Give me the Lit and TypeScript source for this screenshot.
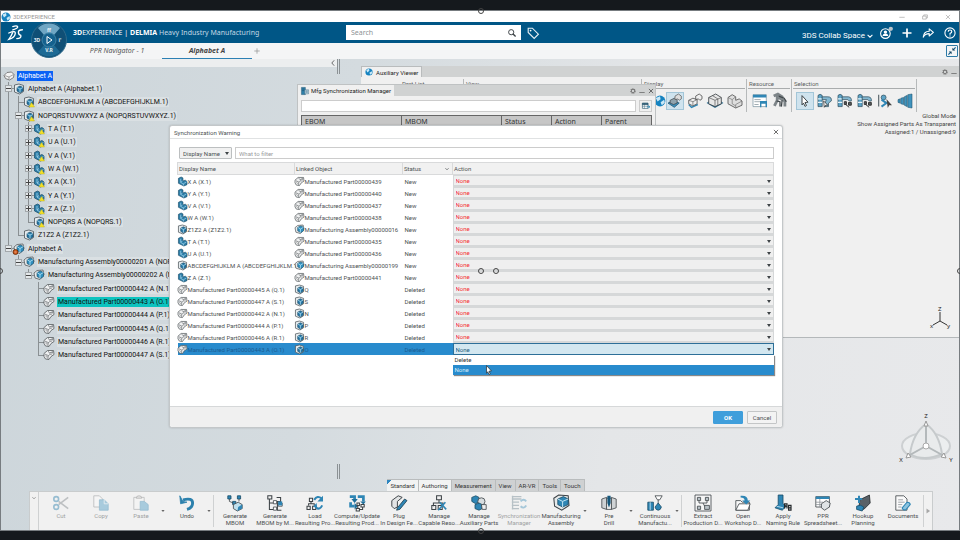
import { LitElement, html, svg, css, nothing } from "lit";
import { customElement } from "lit/decorators.js";
import { classMap } from "lit/directives/class-map.js";

const BLUE = "#2f86b5";
const DARK = "#3c4246";

/* Icon artwork, drawn on a 20 x 20 grid. */
const art: Record<string, unknown> = {
  part: svg`<path d="M1 3l6-3 4 2v7l5-2 4 3v7l-7 3-12-6z" fill="#2e7fa8" stroke="#174a66" stroke-width="1.400"/><path d="M6 4v8l6 4M12 15v4M10 9l-4 3M12 15l7-4" fill="none" stroke="#a8d8ee" stroke-width="1.500"/>`,
  product: svg`<path d="M1 2l9-2 9 3v12l-8 5-10-4z" fill="#e6ecef" stroke="#4a5257" stroke-width="1.600"/><path d="M6 7l6-3 6 3v7l-6 4-6-4z" fill="#2577a5" stroke="#123f5a" stroke-width="1.200"/><path d="M6 7l6 3 6-3M12 10v7" fill="none" stroke="#b6e3f5" stroke-width="1.600"/>`,
  mpart: svg`<path d="M0 7l7-6 12 0 1 8-6 4-4 6-7-1-3-5z" fill="#f0f1f2" stroke="#54595c" stroke-width="1.600"/><path d="M2 8l6 4 10-8M8 12v6M8 2l3 4 7-3" fill="none" stroke="#5f6568" stroke-width="1.300"/><circle cx="6" cy="12" r="2.200" fill="#fff" stroke="#54595c"/><circle cx="14" cy="7" r="2" fill="#fff" stroke="#54595c"/>`,
  massy: svg`<path d="M0 6l6-5 12-1 2 9-8 10-10-3z" fill="#e9ebec" stroke="#54595c" stroke-width="1.600"/><path d="M6 5l7-3 6 3v8l-6 4-7-4z" fill="#2f8fbe" stroke="#14465f" stroke-width="1.200"/><path d="M6 5l6 4 7-4M12 9v8" fill="none" stroke="#c2e9f8" stroke-width="1.600"/>`,
  warn: svg`<path d="M10 20l5-9 6 9z" fill="#f4e02a" stroke="#b9a800" stroke-width=".8"/>`,
  badge: svg`<circle cx="3" cy="16" r="5" fill="#d05a1c" stroke="#5a2305" stroke-width="1.500"/><path d="M1 16h4" stroke="#fff"/>`,
  root: svg`<path d="M0 9l6-6 9-1 5 5-1 6-8 5-8-3z" fill="#f3f3f3" stroke="#666" stroke-width="1.600"/><path d="M1 9l9 3 9-5M10 12v5" fill="none" stroke="#777" stroke-width="1.300"/>`,
  globe: svg`<circle cx="10" cy="10" r="9" fill="#1683c0"/><path d="M3 5l7-3 1 5-5 4zM11 12l6-4 1 5-5 4z" fill="#c9e8f7"/>`,
  cut: svg`<path d="M19 3L7 12M19 17L7 8" stroke="#8a9094" stroke-width="2"/><circle cx="4" cy="5" r="3" fill="none" stroke="#3f8ab3" stroke-width="2"/><circle cx="4" cy="15" r="3" fill="none" stroke="#3f8ab3" stroke-width="2"/>`,
  copy: svg`<path d="M1 1h7l4 4v10H1z" fill="#fafafa" stroke="#7f8487"/><path d="M8 6h6l5 5v8H8z" fill="#62a6ca" stroke="#3f8ab3"/><path d="M14 6v5h5" fill="none" stroke="#e7f3f9"/>`,
  paste: svg`<path d="M1 3h13v15H1z" fill="#f5f5f5" stroke="#85898b"/><path d="M4 4q0-3 3.500-3t3.500 3z" fill="#ddd" stroke="#777"/><path d="M9 8h5l5 4v7H9z" fill="#62a6ca" stroke="#3f8ab3"/>`,
  undo: svg`<path d="M5 6q12-3 12 4 0 6-7 8" fill="none" stroke="#2c81ad" stroke-width="3.600"/><path d="M1 1l1 10 8-2-5-1z" fill="#2c81ad" stroke="#2c81ad"/>`,
  genMbom: svg`<path d="M1 1h4v4H1zM13 1h4v4h-4zM7 8h4v4H7z" fill="${BLUE}" stroke="#174a66"/><path d="M3 5v3l5 2M15 5v3" fill="none" stroke="${DARK}"/><path d="M8 12l6-3 5 3v5l-6 3-5-3z" fill="#bfe0ee" stroke="${DARK}"/><path d="M14 15l5-3v5l-6 3z" fill="${BLUE}"/>`,
  genBy: svg`<path d="M1 1h5v4H1zM3 5v13h5M3 10h5M12 3h5v5h-4v11h5" fill="none" stroke="${DARK}" stroke-width="1.300"/><path d="M8 7h4v4H8zM14 10h5v4h-5zM8 15h4v4H8z" fill="#fff" stroke="${DARK}"/><path d="M14 8h5v5h-5z" fill="${BLUE}"/>`,
  load: svg`<path d="M3 4h4v4H3zM0 14h4v4H0zM7 14h4v4H7zM5 8v3M2 13v-2h7v2" fill="none" stroke="${DARK}" stroke-width="1.300"/><path d="M9 6q4-6 9-2M19 13q-3 6-7 3" fill="none" stroke="${BLUE}" stroke-width="2.600"/><path d="M20 1v7h-7zM12 10l1 8-5-4z" fill="${BLUE}"/>`,
  compute: svg`<path d="M1 2h6v4M11 2h7v6M2 9v5h5" fill="none" stroke="${BLUE}" stroke-width="3.400"/><path d="M3 5h8l-4 5zM14 8h7l-3 4zM7 10l4 4-4 4z" fill="#1f6f9b"/><path d="M10 10h3v3h-3zM15 12h4v3h-4zM9 17h4v3H9zM11 13v4M17 15v3h-4" fill="#fff" stroke="${DARK}" stroke-width="1.300"/>`,
  plug: svg`<path d="M1 7l8-6 5 2-6 5v7l-4 2-3-3z" fill="#e2e4e5" stroke="${DARK}" stroke-width="1.200"/><path d="M8 16l9-11 3 2-9 11-4 1z" fill="${BLUE}" stroke="#1c3d4e"/>`,
  capable: svg`<path d="M7 1h6v5H7zM10 6v4M3 14v-4h12v3M1 13h5v5H1zM9 13h5v5H9z" fill="none" stroke="${DARK}" stroke-width="1.300"/><path d="M11 9l8 9M18 9l-9 10" stroke="${BLUE}" stroke-width="2"/>`,
  aux: svg`<path d="M1 3l5-2 4 2v5l-4 3-5-3z" fill="${BLUE}" stroke="#184b66"/><circle cx="13" cy="8" r="4.500" fill="#d8dddf" stroke="${DARK}"/><path d="M5 12l5-2 4 2v5l-4 2-5-2z" fill="${BLUE}" stroke="#184b66"/><path d="M13 12h6v6h-5z" fill="#eee" stroke="${DARK}"/>`,
  sync: svg`<path d="M1 2h12M1 5h12M1 9h9M1 13h9M1 17h9M2 1v17" stroke="#7f939d" stroke-width="1.600"/><path d="M12 8q4-4 7 0M19 13q-3 5-7 1" fill="none" stroke="#5b9ec2" stroke-width="2.400"/>`,
  bigAssy: svg`<path d="M1 4l6-4 12 1 1 12-9 6-9-5z" fill="#e6e9ea" stroke="${DARK}" stroke-width="1.300"/><path d="M6 5l7-3 6 3v7l-7 3-6-3z" fill="${BLUE}" stroke="#184b66"/><path d="M6 5l6 3 7-3M12 8v7" fill="none" stroke="#c4e6f4" stroke-width="1.200"/>`,
  drill: svg`<path d="M1 5l6-2v15l-6-2zM19 5l-6-2v15l6-2z" fill="#cfd3d5" stroke="${DARK}"/><path d="M7 4h6v14H7z" fill="#f4f4f4" stroke="${DARK}"/><path d="M8 1h4v9l-2 6-2-6z" fill="#16587c"/>`,
  continuous: svg`<path d="M10 1h9l-3 5h-3zM14 6v5" fill="#fff" stroke="${DARK}"/><path d="M1 9h7v10H1z" fill="${BLUE}" stroke="#174a66"/><path d="M4 9v10" stroke="#d5edf7"/><path d="M14 10l4 5q-1 4-4 4t-4-4z" fill="${BLUE}" stroke="#174a66"/>`,
  extract: svg`<path d="M0 0h20v20H0z" fill="#f6f6f6" stroke="${DARK}"/><path d="M3 3h4v4H3zM13 3h4v4h-4zM3 14h4v4H3zM12 13h6v5h-6z" fill="#b9c2c7" stroke="${DARK}"/><path d="M5 7v3h10V7M10 10l2 4" fill="none" stroke="${DARK}"/>`,
  open: svg`<path d="M1 7h6l2 2h9v10H1z" fill="#f8f8f8" stroke="${DARK}"/><path d="M1 19l4-8h14l-3 8z" fill="#fff" stroke="${DARK}"/><path d="M7 1q9-1 9 6h3l-5 5-5-5h3q0-4-5-4z" fill="${BLUE}"/>`,
  naming: svg`<path d="M4 0h6v11l4 3-5 5-9-3 4-4z" fill="${BLUE}" stroke="#174a66"/><path d="M2 14l8 2" stroke="#d3ebf6"/><path d="M12 17v-6h3v6M12 14h3M17 13h3v6h-3zM17 16h3" fill="none" stroke="#24292c" stroke-width="1.500"/>`,
  sheet: svg`<path d="M1 2h17v13H1z" fill="#fff" stroke="${DARK}"/><path d="M1 2h17v3H1z" fill="${BLUE}"/><path d="M1 9h9M1 12h8M6 5v10" stroke="#8a9195"/><path d="M8 11l6-4 5 3-1 5-6 4-4-3z" fill="#dfe3e5" stroke="${DARK}"/>`,
  hook: svg`<path d="M6 6l12-6 1 10-8 8-6-3z" fill="#596167" stroke="#24292c"/><path d="M0 5h9M5 1v9" stroke="${BLUE}" stroke-width="2.500"/><path d="M2 14q5-3 9 1l-2 5-7-2z" fill="${BLUE}" stroke="#174a66"/>`,
  docs: svg`<path d="M1 1h10l4 4v14H1z" fill="#fafafa" stroke="${DARK}"/><path d="M4 6h6M4 9h8M4 12h5M4 15h4" stroke="#8b9195"/><path d="M9 16l6-7q4 0 4 3l-5 6q-4 2-5-2z" fill="#8cc3df" stroke="${BLUE}" stroke-width="1.400"/>`,
  dispA: svg`<path d="M0 13l8-4 8 4-7 6z" fill="#3a8fbb" stroke="#154b67"/><path d="M3 9l6-3 4 2v5l-5 2-5-2z" fill="#8fa3ad" stroke="${DARK}"/><path d="M10 3l5-3 4 3v4l-3 2-2-2-4 1z" fill="#ddd" stroke="#555"/>`,
  dispB: svg`<path d="M1 15l4 4 9-4" fill="none" stroke="${BLUE}" stroke-width="2"/><path d="M1 9l6-3 6 2v6l-6 3-6-3zM11 3l5-3 4 3v4l-3 2-2-2-4 1z" fill="#efefef" stroke="#555" stroke-width="1.200"/><path d="M1 9l6 2 6-3M7 11v5" fill="none" stroke="#666"/>`,
  dispC: svg`<path d="M-2 13l12 7 12-7-4-3H2z" fill="#2c7095"/><path d="M1 5l10-5 8 5v9l-9 4-9-4z" fill="#e7e7e7" stroke="${DARK}" stroke-width="1.200"/><path d="M1 5l9 4 9-4M10 9v8M6 2l8 5v9" fill="none" stroke="#555"/>`,
  dispD: svg`<path d="M0 5l6-4 5 3v5l5-2 4 3v6l-9 4-11-6z" fill="#dedede" stroke="#555" stroke-width="1.200"/><path d="M0 5l6 3v6l5 3M6 8l5-4M11 15l9-5M11 15v5" fill="none" stroke="#777"/>`,
  resA: svg`<path d="M0 1h19v17H0z" fill="#fff" stroke="#77909e"/><path d="M0 1h19v4H0z" fill="${BLUE}"/><path d="M2 8h9M2 11h9M2 15h6" stroke="#7b8b94"/><path d="M11 19v-8h8v8M11 13h8" fill="none" stroke="${BLUE}" stroke-width="2"/>`,
  resB: svg`<path d="M1 3l6-3 6 4v5M6 3v6l-4 8M8 5l9 5v8" fill="none" stroke="#7d8488" stroke-width="4"/><path d="M8 3l8 3 3 5M5 10l5 1v7M13 9l-1 9" fill="none" stroke="#3f464a" stroke-width="1.800"/>`,
  arrow: svg`<path d="M5 1l10 11-5 .5 2.500 5-2.500 1.500-2.500-5.500-2.500 3z" fill="#fff" stroke="#2d3438" stroke-width="1.500"/>`,
  selA: svg`<path d="M0 2q3-3 6 0v16H0z" fill="#5fa4c7" stroke="#2b4a5a"/><path d="M0 7h6M0 12h6" stroke="#e4f3fa" stroke-width="2"/><path d="M6 4h8q6 0 5 6l-4 3v5h-5v-5l2-5H6z" fill="#84b8d1" stroke="#2b4a5a"/><path d="M8 10l6 6h-3l-2 3z" fill="#fff" stroke="#222"/>`,
  selB: svg`<path d="M0 2q3-3 6 0v16H0z" fill="#5fa4c7" stroke="#2b4a5a"/><path d="M0 7h6M0 12h6" stroke="#e4f3fa" stroke-width="2"/><path d="M6 4h9q5 1 4 6h-3l-2-2H6z" fill="#84b8d1" stroke="#2b4a5a"/><path d="M9 11h3v4H9zM15 12h4v4h-4zM11 15l5 4" fill="#565d61" stroke="#333" stroke-width="1.400"/>`,
  selC: svg`<path d="M1 1v17" stroke="#4a565c" stroke-width="1.500"/><circle cx="8" cy="5" r="3.500" fill="#5fa4c7" stroke="#2b4a5a"/><path d="M5 8l7 5-7 5" fill="none" stroke="${BLUE}" stroke-width="2.800"/><path d="M12 7l8 9h-4l-2 4z" fill="#444"/>`,
  fan: svg`<path d="M0 8l3-1v6l-3-1zM4 6l4-1v10l-4-1zM9 4l4-2v16l-4-2zM14 1l6-1v20l-6-1z" fill="#3f93bd" stroke="#1c516d" stroke-width=".8"/>`,
  gridBtn: svg`<path d="M1 3h14v13H1z" fill="#fff" stroke="#25566f" stroke-width="1.600"/><path d="M1 3h14v4H1zM1 11h14M6 3v13" fill="#25566f" stroke="#25566f"/><path d="M12 12h7M16 9l4 3-4 3" fill="none" stroke="#2a86b5" stroke-width="2"/>`,
  mgr: svg`<path d="M1 1h10v18H1z" fill="#2e7fa8" stroke="#174a66"/><path d="M9 7h10v10H9z" fill="#cfe4ee" stroke="#174a66"/><path d="M3 5h5M3 9h5M11 10h6M11 13h6" stroke="#174a66" stroke-width="1.400"/>`,
  gear: svg`<circle cx="10" cy="10" r="7" fill="none" stroke="#777" stroke-width="4" stroke-dasharray="3.600 1.900"/><circle cx="10" cy="10" r="5.500" fill="none" stroke="#777" stroke-width="3"/>`,
  min: svg`<path d="M1 15h18" stroke="#777" stroke-width="3"/>`,
  close: svg`<path d="M3 3l14 14M17 3L3 17" stroke="#555" stroke-width="2.800"/>`,
  shut: svg`<path d="M3 3l14 14M17 3L3 17" stroke="#999" stroke-width="2"/>`,
  hide: svg`<path d="M1 11h18" stroke="#999" stroke-width="2"/>`,
  restore: svg`<path d="M2 7h12v10H2zM6 7V3h12v10h-4" fill="none" stroke="#999" stroke-width="2"/>`,
  caretDown: svg`<path d="M2 5h16l-8 10z" fill="#666"/>`,
  chevDown: svg`<path d="M2 6l8 8 8-8" fill="none" stroke="currentColor" stroke-width="3.500"/>`,
  play: svg`<path d="M5 2l12 8-12 8z" fill="#a7a7a7"/>`,
  chevLeft: svg`<path d="M14 1l-8 9 8 9" fill="none" stroke="#444" stroke-width="2.600"/>`,
  search: svg`<circle cx="8" cy="8" r="6.500" fill="none" stroke="#3c4246" stroke-width="2.400"/><path d="M12 12l7 7" stroke="#3c4246" stroke-width="3.400"/>`,
  tag: svg`<path d="M2 2h7l10 10-7 7L2 9z" fill="none" stroke="#e6eff4" stroke-width="1.900"/><circle cx="6" cy="6" r="1.500" fill="#fff"/>`,
  user: svg`<circle cx="9" cy="11" r="8" fill="none" stroke="#fff" stroke-width="1.800"/><circle cx="9" cy="8.500" r="2.800" fill="#fff"/><path d="M4 15q1-4 5-4t5 4z" fill="#fff"/><circle cx="18" cy="3" r="3.600" fill="#b9c4cb"/>`,
  plus: svg`<path d="M10 1v18M1 10h18" stroke="currentColor" stroke-width="3.400"/>`,
  addTab: svg`<path d="M10 1v18M1 10h18" stroke="#999" stroke-width="2.600"/>`,
  share: svg`<path d="M12 3l7 6-7 6v-4q-7 0-10 6 1-10 10-10z" fill="none" stroke="#fff" stroke-width="1.800" stroke-linejoin="round"/>`,
  help: svg`<circle cx="10" cy="10" r="8.500" fill="none" stroke="#fff" stroke-width="1.800"/><path d="M7 8q0-3 3-3t3 2.500q0 2-3 3.500v2M10 14v2" fill="none" stroke="#fff" stroke-width="1.900"/>`,
  collapse: svg`<path d="M19 1l-6 6M1 19l6-6" stroke="#12608f" stroke-width="3"/><path d="M11 2v7h7zM9 18v-7H2z" fill="#12405c"/>`,
  ds: svg`<path d="M6 2q5-2 6 0t-6 4M1 10q9-4 8 1-1 5-8 7 3-4 5-9M18 6q-5 0-5 3t3 4q1 4-5 4" fill="none" stroke="#fff" stroke-width="1.700" stroke-linecap="round"/>`,
};

const icon = (name: string, cls = "i16", extra = "") => html`
  <svg class=${"ic " + cls} viewBox="0 0 20 20" aria-hidden="true">${art[name]}${extra ? art[extra] : nothing}</svg>`;

const base = css`
  :host, * { box-sizing: border-box; }
  button, input, select { font: inherit; color: inherit; margin: 0; padding: 0; border: 0; border-radius: 0; background: none; }
  .ic { display: block; flex: none; overflow: visible; }
  .i4 { width: 4px; height: 4px; }
  .i6 { width: 6px; height: 6px; }
  .i8 { width: 8px; height: 8px; }
  .i9 { width: 9px; height: 9px; }
  .i10 { width: 10px; height: 10px; }
  .i12 { width: 12px; height: 12px; }
  .i14 { width: 14px; height: 14px; }
  .i16 { width: 16px; height: 16px; }
`;

/* Guides: "|" passes through, "t" branches, "l" ends; "+"/"-" adds an expander. */
type Node = { g: string[]; icon: string; extra?: string; text: string; mark?: string };
const NODES: Node[] = [
  { g: [], icon: "root", text: "Alphabet A", mark: "sel" },
  { g: ["t-"], icon: "product", text: "Alphabet A (Alphabet.1)" },
  { g: ["|", "t"], icon: "product", extra: "warn", text: "ABCDEFGHIJKLM A (ABCDEFGHIJKLM.1)" },
  { g: ["|", "t-"], icon: "product", extra: "warn", text: "NOPQRSTUVWXYZ A (NOPQRSTUVWXYZ.1)" },
  ...["T", "U", "V", "W", "X", "Y", "Z"].map((c) => ({ g: ["|", "|", "t+"], icon: "part", extra: "warn", text: `${c} A (${c}.1)` })),
  { g: ["|", "|", "l"], icon: "product", extra: "warn", text: "NOPQRS A (NOPQRS.1)" },
  { g: ["|", "l"], icon: "product", text: "Z1Z2 A (Z1Z2.1)" },
  { g: ["l-"], icon: "massy", extra: "badge", text: "Alphabet A" },
  { g: ["", "l-"], icon: "massy", text: "Manufacturing Assembly00000201 A (NOPQRSTUVWXYZ.1)" },
  { g: ["", "", "l-"], icon: "massy", text: "Manufacturing Assembly00000202 A (NOPQRS.1)" },
  ...["N", "O", "P", "Q", "R", "S"].map((c, i) => ({
    g: ["", "", "", i === 5 ? "l" : "t"], icon: "mpart",
    text: `Manufactured Part0000044${i + 2} A (${c}.1)`, mark: c === "O" ? "hit" : "",
  })),
];

@customElement("product-tree")
class ProductTree extends LitElement {
  static styles = [base, css`
    :host { display: block; overflow: hidden; font-family: Roboto, "Noto Sans", sans-serif; }
    .tree { display: grid; grid-auto-rows: 1fr; height: 293px; padding-left: 3px; }
    .row { display: flex; align-items: center; white-space: nowrap; }
    .guide { flex: none; width: 10px; height: 100%; display: flex; align-items: center; padding-left: 1px;
      background-repeat: no-repeat; }
    .pass { background-image: linear-gradient(#8a9093, #8a9093); background-size: 1px 100%; background-position: 4px 0; }
    .tee, .end { background-image: linear-gradient(#8a9093, #8a9093), linear-gradient(#8a9093, #8a9093); background-position: 4px 0, 4px 50%; }
    .tee { background-size: 1px 100%, 6px 1px; }
    .end { background-size: 1px 50%, 6px 1px; }
    .exp { width: 7px; height: 7px; border: 1px solid #a3a8ab; background: #e4e8ea; display: grid; place-items: center; }
    .exp svg { display: block; width: 5px; height: 5px; }
    .label { padding: 0 1px; margin-left: 3px; line-height: 10px; background: #dae0e3; color: #111; }
    .sel { background: #0a62f5; color: #fff; }
    .hit { background: #0bc3bf; }
  `];
  render() {
    const kind = (g: string) => ({ guide: true, pass: g === "|", tee: g[0] === "t", end: g[0] === "l" });
    return html`<div class="tree" role="tree">${NODES.map((n) => html`
      <div class="row" role="treeitem">
        ${n.g.map((g) => html`<span class=${classMap(kind(g))}>${g[1]
          ? html`<button class="exp" aria-label="Toggle"><svg viewBox="0 0 5 5"><path d=${g[1] === "+" ? "M0 2.5h5M2.5 0v5" : "M0 2.5h5"} stroke="#444" /></svg></button>`
          : nothing}</span>`)}
        ${icon(n.icon, "i10", n.extra)}
        <span class="label ${n.mark ?? ""}">${n.text}</span>
      </div>`)}</div>`;
  }
}

type Rec = [string, string, string, string, string];
const RECORDS: Rec[] = [
  ["part", "X A (X.1)", "mpart", "Manufactured Part00000439", "New"],
  ["part", "Y A (Y.1)", "mpart", "Manufactured Part00000440", "New"],
  ["part", "V A (V.1)", "mpart", "Manufactured Part00000437", "New"],
  ["part", "W A (W.1)", "mpart", "Manufactured Part00000438", "New"],
  ["product", "Z1Z2 A (Z1Z2.1)", "massy", "Manufacturing Assembly00000016", "New"],
  ["part", "T A (T.1)", "mpart", "Manufactured Part00000435", "New"],
  ["part", "U A (U.1)", "mpart", "Manufactured Part00000436", "New"],
  ["product", "ABCDEFGHIJKLM A (ABCDEFGHIJKLM.1)", "massy", "Manufacturing Assembly00000199", "New"],
  ["part", "Z A (Z.1)", "mpart", "Manufactured Part00000441", "New"],
  ["mpart", "Manufactured Part00000445 A (Q.1)", "product", "Q", "Deleted"],
  ["mpart", "Manufactured Part00000447 A (S.1)", "product", "S", "Deleted"],
  ["mpart", "Manufactured Part00000442 A (N.1)", "product", "N", "Deleted"],
  ["mpart", "Manufactured Part00000444 A (P.1)", "product", "P", "Deleted"],
  ["mpart", "Manufactured Part00000446 A (R.1)", "product", "R", "Deleted"],
  ["mpart", "Manufactured Part00000443 A (O.1)", "product", "O", "Deleted"],
];

@customElement("sync-dialog")
class SyncDialog extends LitElement {
  static styles = [base, css`
    :host { display: flex; flex-direction: column; background: #fff; border: 1px solid #c3c7c9; border-radius: 3px;
      font-family: Roboto, "Noto Sans", sans-serif; font-size: 6px; color: #4d5153; box-shadow: 0 0 2px rgba(0, 0, 0, .2); }
    .title { display: flex; align-items: center; justify-content: space-between; height: 13px; padding: 0 3px 0 4px;
      border-bottom: 1px solid #e0e2e3; }
    .body { flex: 1; padding: 8px 8px 0 7px; }
    .filter { display: flex; gap: 3px; margin-left: 2px; height: 12px; }
    .pick { position: relative; width: 53px; }
    .pick select { width: 100%; height: 100%; padding: 0 3px; border: 1px solid #bcbfc0; border-radius: 1px; background: #f1f1f1; }
    select { appearance: none; display: block; }
    .caret::after { content: ""; position: absolute; right: 3px; top: 5px; border: 2px solid transparent;
      border-top: 3px solid #3f4447; border-bottom: 0; pointer-events: none; }
    .text { flex: 1; min-width: 0; padding: 0 3px; border: 1px solid #ccc; }
    .text::placeholder { color: #989b9d; opacity: 1; }
    table { width: 100%; margin-top: 3px; border-collapse: collapse; table-layout: fixed; }
    th { height: 12px; padding: 0 1px; text-align: left; font-weight: 400; background: #f1f1f1; border: 1px solid #d9dadb; }
    td { height: 12px; padding: 0; }
    .c1 { width: 117px; } .c2 { width: 108px; } .c3 { width: 50px; }
    .sort { display: flex; justify-content: space-between; align-items: center; padding-right: 2px; }
    .obj { display: flex; align-items: center; gap: 1px; white-space: nowrap; }
    .stat { padding-left: 2px; }
    .act { position: relative; background: #efefef; }
    .act select { width: 100%; height: 12px; padding: 0 2px; border: 1px solid #d6d8d9; border-bottom-width: 2px; color: #f42f35; }
    .on td { background: #288bcd; color: #1c5c92; }
    .on .act { background: #d3e7f0; }
    .on .act select { border: 1px solid #2d6f98; color: #245c80; }
    .menu { position: absolute; left: 0; right: 0; top: 12px; margin: 0; padding: 0; list-style: none; background: #fff;
      color: #333; box-shadow: 1px 1px 1px #888; }
    .menu li { height: 10px; line-height: 10px; padding-left: 2px; }
    .menu .cur { background: #288bcd; color: #d7ebf8; }
    footer { display: flex; justify-content: flex-end; align-items: center; gap: 4px; height: 21px; padding-right: 5px;
      background: #f0f0f0; border-top: 1px solid #d6d8d9; border-radius: 0 0 3px 3px; }
    .btn { width: 30px; height: 13px; border: 1px solid #c4c6c7; border-radius: 1px; background: #f3f3f3; }
    .ok { border-color: #3f9edb; background: #3f9edb; color: #fff; font-weight: 700; }
    .cursor { position: absolute; left: 31px; top: 22px; }
  `];
  render() {
    return html`
      <div class="title"><span>Synchronization Warning</span><button aria-label="Close">${icon("close", "i6")}</button></div>
      <div class="body">
        <div class="filter">
          <span class="pick caret"><select aria-label="Filter column"><option>Display Name</option></select></span>
          <input class="text" aria-label="Filter" placeholder="What to filter" />
        </div>
        <table>
          <colgroup><col class="c1" /><col class="c2" /><col class="c3" /><col /></colgroup>
          <thead><tr><th>Display Name</th><th>Linked Object</th><th><span class="sort">Status${icon("chevDown", "i4")}</span></th><th>Action</th></tr></thead>
          <tbody>${RECORDS.map((r, i) => this.line(r, i === RECORDS.length - 1))}</tbody>
        </table>
      </div>
      <footer><button class="btn ok">OK</button><button class="btn">Cancel</button></footer>`;
  }
  line([ai, a, bi, b, status]: Rec, on: boolean) {
    return html`<tr class=${on ? "on" : ""}>
      <td><span class="obj">${icon(ai, "i9")}${a}</span></td>
      <td><span class="obj">${icon(bi, "i9")}${b}</span></td>
      <td class="stat">${status}</td>
      <td class="act caret"><select aria-label="Action for ${a}"><option>None</option><option>Delete</option></select>
        ${on ? html`<ul class="menu"><li>Delete</li><li class="cur">None</li></ul><span class="cursor">${icon("arrow", "i10")}</span>` : nothing}</td>
    </tr>`;
  }
}

@customElement("aux-viewer")
class AuxViewer extends LitElement {
  static styles = [base, css`
    :host { display: flex; flex-direction: column; background: #f0f0f0; font-family: Roboto, "Noto Sans", sans-serif; font-size: 6px;
      color: #5b5f61; border-bottom: 1px solid #b4b8ba; }
    .bar { display: flex; align-items: center; height: 11px; background: #d0d2d2; padding-right: 2px; gap: 3px; }
    .tab { display: flex; align-items: center; gap: 3px; height: 11px; margin-right: auto; padding: 0 3px; background: #f0f0f0;
      border: 1px solid #b9bcbd; border-bottom: 0; color: #222; }
    .groups { display: flex; height: 33px; margin-top: 2px; padding-left: 3px; }
    .group { border-right: 1px solid #b6b9ba; padding: 0 1px; }
    .name { line-height: 9px; border-bottom: 1px solid #a9acad; padding-left: 1px; }
    .tools { display: flex; gap: 2px; padding: 3px 0 0 3px; }
    .tool { width: 18px; height: 18px; display: grid; place-items: center; }
    .on { background: #cfe3ee; border: 1px solid #a3c6d8; }
    .list { width: 100px; } .list .name { padding-left: 37px; }
    .view { width: 178px; } .disp { width: 105px; } .res { width: 45px; } .pick { width: 125px; }
    .disp .tools { padding-left: 11px; }
    .half { width: 10px; }
    .info { align-self: flex-end; text-align: right; line-height: 8px; padding-right: 3px; color: #444; }
    .axis { width: 30px; height: 26px; margin: auto 4px 6px auto; }
    text { font: 6px "Noto Sans", sans-serif; fill: #222; }
  `];
  render() {
    const set = (names: string[], on = "") => names.map((n) => html`<button class=${"tool " + (n === on ? "on" : "")} aria-label=${n}>${icon(n, n === "arrow" ? "i12" : "i14")}</button>`);
    return html`
      <div class="bar"><span class="tab">${icon("globe", "i8")}Auxiliary Viewer</span>${icon("gear", "i6")}${icon("min", "i6")}</div>
      <div class="groups">
        <div class="group list"><div class="name">Part List</div></div>
        <div class="group view"><div class="name">View</div></div>
        <div class="group disp"><div class="name">Display</div><div class="tools"><button class="tool half" aria-label="Globe">${icon("globe", "i12")}</button>${set(["dispA", "dispB", "dispC", "dispD"], "dispA")}</div></div>
        <div class="group res"><div class="name">Resource</div><div class="tools">${set(["resA", "resB"])}</div></div>
        <div class="group pick"><div class="name">Selection</div><div class="tools">${set(["arrow", "selA", "selB", "selB", "selC", "fan"], "arrow")}</div></div>
      </div>
      <div class="info">Global Mode<br />Show Assigned Parts As Transparent<br />Assigned:1 / Unassigned:9</div>
      <svg class="axis" viewBox="0 0 30 26"><path d="M15 7v9l-7 4M15 16l7 4" fill="none" stroke="#333" /><text x="13" y="6">Z</text><text x="5" y="23">x</text><text x="22" y="23">y</text></svg>`;
  }
}

@customElement("sync-manager")
class SyncManager extends LitElement {
  static styles = [base, css`
    :host { display: block; background: #f0f0f0; border: 1px solid #bfc2c3; font-size: 7px; color: #333; }
    .bar { display: flex; align-items: center; gap: 3px; height: 11px; background: #d0d2d2; padding-right: 1px; }
    .tab { display: flex; align-items: center; gap: 2px; height: 11px; padding: 0 3px; margin-right: auto; background: #f0f0f0;
      font-family: Roboto, "Noto Sans", sans-serif; font-size: 6px; color: #222; }
    .find { display: flex; gap: 3px; padding: 4px 3px 3px; }
    .find input { flex: 1; height: 12px; background: #fff; border: 1px solid #ccc; }
    .find button { width: 13px; height: 12px; display: grid; place-items: center; border: 1px solid #ccc; }
    table { width: calc(100% - 6px); margin: 0 3px; border-collapse: collapse; table-layout: fixed; }
    th { height: 12px; padding: 0 3px; text-align: left; font-weight: 400; line-height: 10px; background: #c6c6c6; border: 1px solid #666; }
    .w { width: 100px; }
  `];
  render() {
    return html`
      <div class="bar"><span class="tab">${icon("mgr", "i8")}Mfg Synchronization Manager</span>${icon("gear", "i6")}${icon("min", "i6")}${icon("close", "i6")}</div>
      <div class="find"><input aria-label="Find" /><button aria-label="Columns">${icon("gridBtn", "i8")}</button></div>
      <table><tr><th class="w">EBOM</th><th class="w">MBOM</th><th>Status</th><th>Action</th><th>Parent</th></tr></table>`;
  }
}

type Tool = { icon: string; a: string; b?: string; off?: boolean; wide?: boolean; more?: boolean; end?: boolean };
const TOOLS: Tool[] = [
  { icon: "cut", a: "Cut", off: true }, { icon: "copy", a: "Copy", off: true }, { icon: "paste", a: "Paste", off: true, more: true },
  { icon: "undo", a: "Undo", more: true, end: true },
  { icon: "genMbom", a: "Generate", b: "MBOM" }, { icon: "genBy", a: "Generate", b: "MBOM by M..." },
  { icon: "load", a: "Load", b: "Resulting Pro..." }, { icon: "compute", a: "Compute/Update", b: "Resulting Prod...", wide: true },
  { icon: "plug", a: "Plug", b: "In Design Fe..." }, { icon: "capable", a: "Manage", b: "Capable Reso..." },
  { icon: "aux", a: "Manage", b: "Auxiliary Parts" }, { icon: "sync", a: "Synchronization", b: "Manager", off: true },
  { icon: "bigAssy", a: "Manufacturing", b: "Assembly", wide: true, more: true },
  { icon: "drill", a: "Pre", b: "Drill", more: true }, { icon: "continuous", a: "Continuous", b: "Manufactu...", more: true, end: true },
  { icon: "extract", a: "Extract", b: "Production D..." }, { icon: "open", a: "Open", b: "Workshop D..." },
  { icon: "naming", a: "Apply", b: "Naming Rule" }, { icon: "sheet", a: "PPR", b: "Spreadsheet..." },
  { icon: "hook", a: "Hookup", b: "Planning" }, { icon: "docs", a: "Documents", end: true },
];

@customElement("action-bar")
class ActionBar extends LitElement {
  static styles = [base, css`
    :host { display: block; font-family: Roboto, "Noto Sans", sans-serif; font-size: 6px; color: #4a4e50; }
    .tabs { display: flex; justify-content: center; padding-left: 12px; }
    .tab { height: 12px; padding: 0 3px; background: #cfd1d2; border: 1px solid #b9bcbd; border-width: 1px 1px 0 0; color: #333; }
    .live { background: #f2f3f3; }
    .mark { background: linear-gradient(135deg, #2e86c0 3px, #f2f3f3 3px); }
    .strip { display: flex; margin: 0 26px 0 28px; height: 39px; background: #f1f1f1; border: 1px solid #c9cccd; border-bottom: 0; }
    .fold { width: 9px; border-right: 1px solid #cfd1d2; margin-right: 2px; display: flex; justify-content: center; padding-top: 4px; color: #777; }
    .tool { width: 40px; display: flex; flex-direction: column; align-items: center; padding-top: 3px; line-height: 7px; white-space: nowrap; }
    .tool span { margin-top: 1px; text-align: center; }
    .wide { width: 44px; }
    .off { opacity: .5; }
    .more { width: 6px; display: flex; align-items: center; }
    .sep { width: 1px; margin: 3px 1px 3px 0; background: #cfd1d2; }
    .next { display: flex; align-items: center; }
  `];
  render() {
    const tabs = ["Standard", "Authoring", "Measurement", "View", "AR-VR", "Tools", "Touch"];
    return html`
      <div class="tabs" role="tablist">${tabs.map((t, i) => html`<button role="tab" class=${classMap({ tab: true, live: i < 2, mark: i === 0 })}>${t}</button>`)}</div>
      <div class="strip">
        <button class="fold" aria-label="Collapse">${icon("chevDown", "i4")}</button>
        ${TOOLS.map((t) => html`
          <button class=${classMap({ tool: true, wide: !!t.wide, off: !!t.off })}>${icon(t.icon)}<span>${t.a}${t.b ? html`<br />${t.b}` : nothing}</span></button>
          ${t.more ? html`<button class="more" aria-label="More">${icon("caretDown", "i4")}</button>` : nothing}
          ${t.end ? html`<span class="sep"></span>` : nothing}`)}
        <button class="next" aria-label="Next">${icon("play", "i6")}</button>
      </div>`;
  }
}

@customElement("app-root")
class AppRoot extends LitElement {
  static styles = [base, css`
    :host { position: relative; display: flex; flex-direction: column; height: 100vh; overflow: hidden;
      font-family: "Noto Sans", "Open Sans", sans-serif; font-size: 7px; background: #15191d; padding: 10px 0 9px; }
    .frame { position: relative; flex: 1; min-height: 0; display: flex; flex-direction: column; border: 1px solid #777c80;
      background: linear-gradient(100deg, #ccd5da, #d4dbdf 35%, #e4e6e8 65%, #e8e9eb); }
    .title { display: flex; align-items: center; gap: 2px; height: 11px; padding: 0 8px 0 0; background: #fff; color: #999;
      font-family: Roboto, "Noto Sans", sans-serif; font-size: 6px; }
    .win { display: flex; gap: 17px; margin-left: auto; }
    header { display: flex; align-items: center; height: 21px; padding: 0 3px 0 7px; background: #005686; color: #fff; }
    .brand { margin-left: 49px; width: 273px; white-space: nowrap; }
    .brand span { color: #c3d8e5; }
    .search { display: flex; align-items: center; width: 175px; height: 15px; padding: 0 5px; background: #fff; margin-right: 6px; }
    .search input { flex: 1; min-width: 0; }
    .search input::placeholder { color: #8d9295; opacity: 1; }
    .right { display: flex; align-items: center; gap: 10px; margin-left: auto; }
    .space { display: flex; align-items: center; gap: 2px; padding-top: 6px; margin-right: -3px; font-size: 8px; font-family: Roboto, "Noto Sans", sans-serif; }
    nav { display: flex; height: 16px; padding: 0 1px 0 71px; background: #f4f5f6; color: #555; font-style: italic; }
    nav a { width: 90px; text-align: center; line-height: 16px; color: inherit; text-decoration: none; }
    nav .cur { font-weight: 700; color: #444; border-bottom: 1px solid #2c80b4; }
    .add { margin-left: 2px; }
    .fit { margin-left: auto; width: 12px; height: 12px; border: 1px solid #2d7aa6; display: grid; place-items: center; align-self: center; border-radius: 1px; }
    .compass { position: absolute; left: 30px; top: 11px; width: 36px; height: 36px; }
    .compass text, .manip text { font: 700 5px "Noto Sans", sans-serif; fill: #e6f1f7; text-anchor: middle; }
    .manip text { font-weight: 400; font-size: 6px; fill: #222; }
    .work { position: relative; flex: 1; min-height: 0; }
    .side { width: 337px; }
    .strip { display: flex; justify-content: flex-end; align-items: center; height: 8px; background: #eceeef; padding-right: 2px; margin-bottom: 2px; }
    .grip { position: absolute; left: 336px; width: 3px; height: 15px; border: 1px solid #8b9194; border-width: 0 1px; }
    .g1 { top: 0; } .g2 { bottom: 51px; }
    aux-viewer { position: absolute; left: 360px; right: 0; top: 7px; height: 272px; }
    sync-manager { position: absolute; left: 296px; top: 25px; width: 359px; height: 60px; }
    sync-dialog { position: absolute; left: 168px; right: 176px; top: 66px; height: 303px; }
    action-bar { position: absolute; left: 0; right: 0; bottom: 0; }
    .manip { position: absolute; right: 3px; bottom: 62px; width: 60px; height: 56px; }
    .knob { position: absolute; width: 6px; height: 6px; border: 1px solid #444; border-radius: 50%; }
    .t { left: calc(50% - 2px); top: -3px; } .b { left: calc(50% - 2px); bottom: -4px; }
    .l { left: -4px; top: calc(50% - 3px); } .r { right: -4px; top: calc(50% - 3px); }
    .m1 { left: calc(50% - 2px); top: calc(50% - 3px); } .m2 { left: calc(50% + 13px); top: calc(50% - 3px); }
  `];
  render() {
    return html`<div class="frame">
      <div class="title">${icon("globe", "i10")}<span>3DEXPERIENCE</span><span class="win">${icon("hide", "i6")}${icon("restore", "i6")}${icon("shut", "i6")}</span></div>
      <header>
        ${icon("ds", "i16")}
        <div class="brand"><b>3D</b>EXPERIENCE | <b>DELMIA</b> <span>Heavy Industry Manufacturing</span></div>
        <label class="search"><input aria-label="Search" placeholder="Search" />${icon("search", "i8")}</label>
        ${icon("tag", "i12")}
        <div class="right"><span class="space">3DS Collab Space ${icon("chevDown", "i6")}</span>${icon("user", "i12")}${icon("plus", "i10")}${icon("share", "i12")}${icon("help", "i12")}</div>
      </header>
      <nav><a href="#">PPR Navigator - 1</a><a href="#" class="cur">Alphabet A</a><button class="add" aria-label="New tab">${icon("addTab", "i6")}</button><button class="fit" aria-label="Fit">${icon("collapse", "i8")}</button></nav>
      <div class="work">
        <div class="side"><div class="strip">${icon("chevLeft", "i6")}</div><product-tree></product-tree></div>
        <span class="grip g1"></span><span class="grip g2"></span>
        <svg class="manip" viewBox="0 0 60 56">
          <ellipse cx="30" cy="34" rx="24" ry="13" fill="#eceeef" stroke="#cdd0d2" stroke-width="2" />
          <path d="M30 12q-13 9-16 30 14 8 32 0Q43 21 30 12z" fill="#e9ebec" stroke="#c6cacc" stroke-width="2" />
          <path d="M30 12v22l-18 10M30 34l18 10" fill="none" stroke="#b4b9bb" stroke-width="2" />
          <path d="M28 14l2-5 2 5zM10 46l2-5 3 4zM50 46l-2-5-3 4z" fill="#fff" stroke="#999" />
          <circle cx="30" cy="34" r="3" fill="#fff" stroke="#aaa" />
          <text x="30" y="6">Z</text><text x="5" y="50">X</text><text x="55" y="50">Y</text>
        </svg>
        <action-bar></action-bar>
        <aux-viewer></aux-viewer>
        <sync-manager></sync-manager>
        <sync-dialog role="dialog"></sync-dialog>
      </div>
      <svg class="compass" viewBox="0 0 36 36">
        <circle cx="18" cy="18" r="17.500" fill="#0f4f76" stroke="#2f6b8c" />
        <path d="M7 6a16 16 0 0 1 22 0l-6 7a7 7 0 0 0-10 0z" fill="#6fa6c4" />
        <path d="M7 30a16 16 0 0 0 22 0l-6-7a7 7 0 0 1-10 0z" fill="#1e6a94" />
        <circle cx="18" cy="18" r="7" fill="#14618e" stroke="#3d83a8" />
        <path d="M16 14.500l5 3.500-5 3.500z" fill="none" stroke="#fff" />
        <text x="18" y="10">ff</text><text x="6" y="20">3D</text><text x="29" y="20">i'</text><text x="18" y="30">V.R</text>
      </svg>
      <span class="knob t"></span><span class="knob b"></span><span class="knob l"></span><span class="knob r"></span><span class="knob m1"></span><span class="knob m2"></span>
    </div>`;
  }
}
